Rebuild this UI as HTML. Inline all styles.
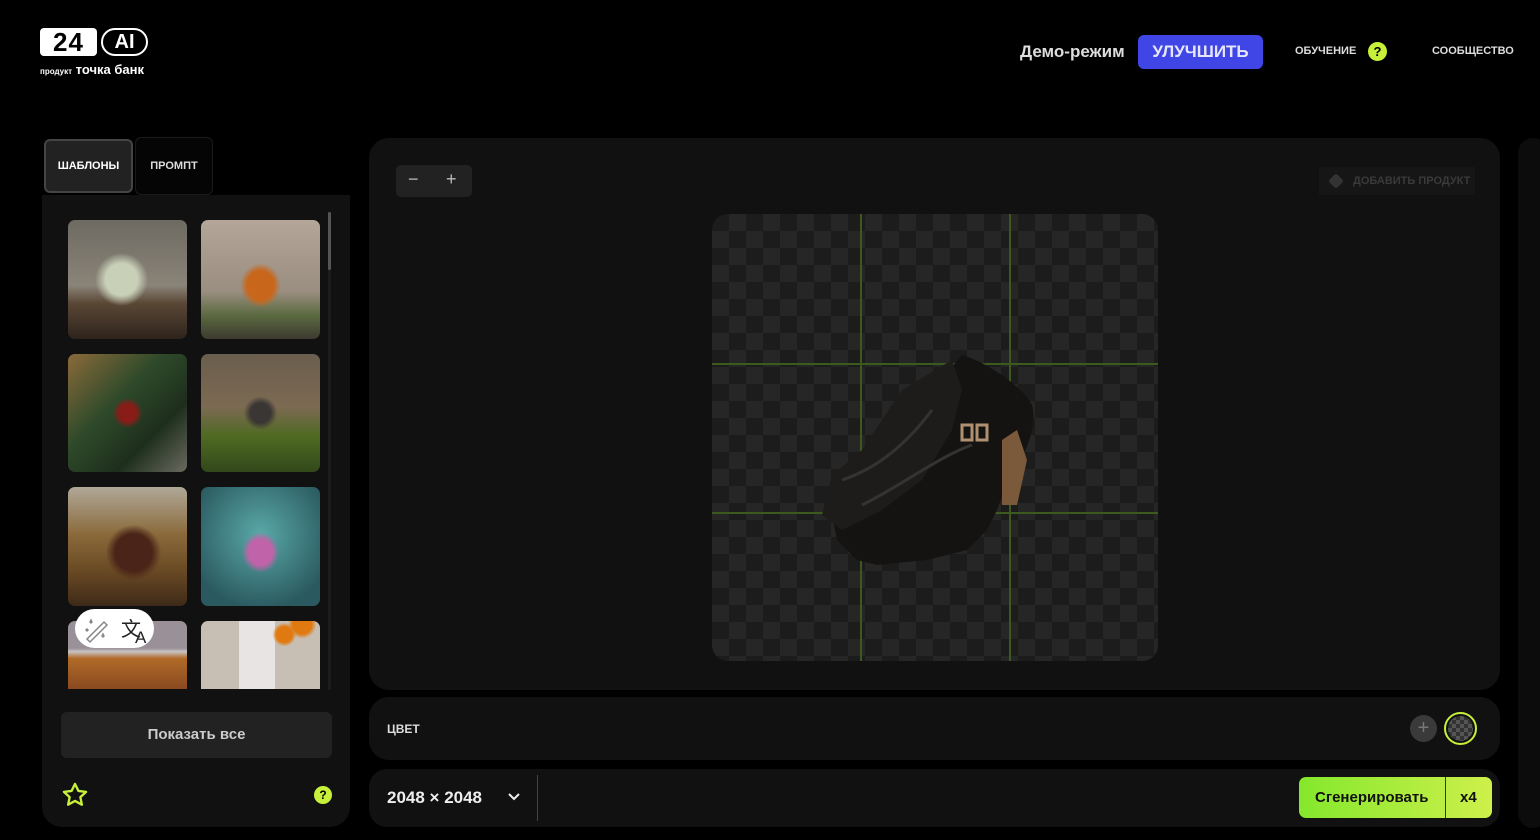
<!DOCTYPE html>
<html><head><meta charset="utf-8"><style>
*{margin:0;padding:0;box-sizing:border-box}
body{width:1540px;height:840px;background:#000;font-family:"Liberation Sans",sans-serif;color:#fff;position:relative;overflow:hidden}
.a{position:absolute}
.th{position:absolute;width:119px;border-radius:7px;overflow:hidden}
.ck{background:repeating-conic-gradient(#262626 0 25%,#1c1c1c 0 50%) 0 0/34px 34px}
</style></head><body>
<!-- logo -->
<div class="a" style="left:40px;top:28px;width:57px;height:28px;background:#fff;border-radius:4px;color:#000;font-weight:bold;font-size:26px;line-height:28px;text-align:center;letter-spacing:1px">24</div>
<div class="a" style="left:101px;top:28px;width:47px;height:28px;border:2px solid #fff;border-radius:14px;font-weight:bold;font-size:20px;line-height:24px;text-align:center">AI</div>
<div class="a" style="left:40px;top:62px;font-size:13px;font-weight:bold;white-space:nowrap"><span style="font-size:8px">продукт</span> точка банк</div>
<!-- header -->
<div class="a" style="left:1020px;top:42px;font-size:17px;font-weight:bold;color:#ddd">Демо-режим</div>
<div class="a" style="left:1138px;top:35px;width:125px;height:34px;background:#4045e6;border-radius:6px;font-size:17px;font-weight:bold;color:#e6e6ff;text-align:center;line-height:34px">УЛУЧШИТЬ</div>
<div class="a" style="left:1295px;top:45px;font-size:11px;font-weight:bold;color:#ddd">ОБУЧЕНИЕ</div>
<div class="a" style="left:1368px;top:42px;width:19px;height:19px;border-radius:50%;background:#c7f03a;color:#000;font-weight:bold;font-size:13px;text-align:center;line-height:19px">?</div>
<div class="a" style="left:1432px;top:45px;font-size:11px;font-weight:bold;color:#ddd">СООБЩЕСТВО</div>
<!-- tabs -->
<div class="a" style="left:44px;top:139px;width:89px;height:54px;background:#222;border:2px solid #444;border-radius:6px;font-size:11px;font-weight:bold;text-align:center;line-height:50px">ШАБЛОНЫ</div>
<div class="a" style="left:135px;top:137px;width:78px;height:58px;background:#050505;border:1px solid #1a1a1a;border-radius:6px;font-size:11px;font-weight:bold;color:#ddd;text-align:center;line-height:56px">ПРОМПТ</div>
<!-- left panel -->
<div class="a" style="left:42px;top:195px;width:308px;height:632px;background:#111;border-radius:0 0 20px 20px"></div>
<div class="a" style="left:328px;top:212px;width:3px;height:478px;background:#1c1c1c"></div>
<div class="a" style="left:328px;top:212px;width:3px;height:58px;background:#555;border-radius:2px"></div>
<div class="th" style="left:68px;top:220px;height:119px;background:radial-gradient(circle at 45% 50%,#c9d0b8 0 18%,transparent 30%),linear-gradient(180deg,#6d6a62 0%,#8a8478 55%,#5a4736 70%,#2e241c 100%)"></div>
<div class="th" style="left:201px;top:220px;height:119px;background:radial-gradient(ellipse at 50% 55%,#c8671c 0 16%,transparent 24%),linear-gradient(180deg,#b4a698,#9a8e80 60%,#5b6a40 80%,#3d3a30)"></div>
<div class="th" style="left:68px;top:354px;height:118px;background:radial-gradient(circle at 50% 50%,#8a1c18 0 10%,transparent 18%),linear-gradient(135deg,#8a6a3a,#2e4a2a 40%,#1e2e1c 70%,#6a6a60)"></div>
<div class="th" style="left:201px;top:354px;height:118px;background:radial-gradient(ellipse at 50% 50%,#3a3634 0 12%,transparent 20%),linear-gradient(180deg,#6a5e4e,#7c6a52 45%,#4e6a22 70%,#32481a)"></div>
<div class="th" style="left:68px;top:487px;height:119px;background:radial-gradient(ellipse at 55% 55%,#4a2418 0 20%,transparent 30%),linear-gradient(180deg,#b0a898,#8a6a3a 40%,#6a4a24 70%,#3e2a18)"></div>
<div class="th" style="left:201px;top:487px;height:119px;background:radial-gradient(ellipse at 50% 55%,#c063a8 0 14%,transparent 22%),radial-gradient(circle at 50% 40%,#5aa8a8,#2a5a60 80%)"></div>
<div class="th" style="left:68px;top:621px;height:68px;border-radius:7px 7px 0 0;background:linear-gradient(180deg,#9a9098 0 40%,#c8c4c4 45%,#b06a28 55%,#8a4a20 100%)"></div>
<div class="th" style="left:201px;top:621px;height:68px;border-radius:7px 7px 0 0;background:radial-gradient(circle at 70% 20%,#e07a10 0 8%,transparent 12%),radial-gradient(circle at 85% 5%,#e07a10 0 8%,transparent 12%),linear-gradient(90deg,transparent 32%,#e8e4e4 32% 62%,transparent 62%),#c8bfb4"></div>
<div class="a" style="left:75px;top:609px;width:79px;height:39px;background:#fff;border-radius:20px"></div>
<svg class="a" style="left:82px;top:614px" width="30" height="30" viewBox="0 0 30 30" fill="none" stroke="#888" stroke-width="1.5"><path d="M5 25L22 8l3 3L8 28z"/><path d="M8 8l1-2 1 2-1 1zM20 22l1-2 1 2-1 1zM4 16l1-1 1 1-1 1z"/></svg>
<div class="a" style="left:121px;top:613px;font-size:20px;color:#222">文<span style="font-size:17px;vertical-align:-7px;margin-left:-6px">A</span></div>
<div class="a" style="left:61px;top:712px;width:271px;height:46px;background:#222;border-radius:6px;font-size:15px;font-weight:bold;color:#ccc;text-align:center;line-height:46px">Показать все</div>
<svg class="a" style="left:61px;top:781px" width="28" height="28" viewBox="0 0 24 24" fill="none" stroke="#c7f03a" stroke-width="2" stroke-linejoin="round"><path d="M12 2.5l2.9 6 6.6.8-4.9 4.5 1.3 6.5L12 17.1 6.1 20.3l1.3-6.5-4.9-4.5 6.6-.8z"/></svg>
<div class="a" style="left:314px;top:786px;width:18px;height:18px;border-radius:50%;background:#c7f03a;color:#000;font-weight:bold;font-size:12px;text-align:center;line-height:18px">?</div>
<!-- main panel -->
<div class="a" style="left:369px;top:138px;width:1131px;height:552px;background:#111;border-radius:20px"></div>
<div class="a" style="left:1518px;top:138px;width:30px;height:690px;border-radius:20px;background:#0c0c0c"></div>
<div class="a" style="left:396px;top:165px;width:76px;height:32px;background:#222;border-radius:5px;color:#bbb;font-size:18px"><span class="a" style="left:12px;top:4px">−</span><span class="a" style="left:50px;top:4px">+</span></div>
<div class="a" style="left:1319px;top:167px;width:156px;height:28px;background:#161616;font-size:11px;font-weight:bold;color:#3a3a3a;line-height:28px;padding-left:34px">ДОБАВИТЬ ПРОДУКТ</div>
<div class="a" style="left:1329px;top:174px;width:14px;height:14px;background:#333;border-radius:3px;transform:rotate(45deg) scale(.8)"></div>
<div class="a ck" style="left:712px;top:214px;width:446px;height:447px;border-radius:16px"></div>
<div class="a" style="left:712px;top:363px;width:446px;height:2px;background:#3d5a1e"></div>
<div class="a" style="left:712px;top:512px;width:446px;height:2px;background:#3d5a1e"></div>
<div class="a" style="left:860px;top:214px;width:2px;height:447px;background:#3d5a1e"></div>
<div class="a" style="left:1009px;top:214px;width:2px;height:447px;background:#3d5a1e"></div>
<svg class="a" style="left:812px;top:345px" width="235" height="225" viewBox="0 0 235 225">
<path d="M150 10c20 5 60 30 70 50 5 20-5 50-20 65l-15 40-10 20-20 20-40 10-50 5-20-5-20-20-5-25 10-30 30-30 40-40z" fill="#151311"/>
<path d="M140 15l-50 30-40 60-30 25-10 40 20 15 40-20 40-30 30-50 10-40z" fill="#1e1c1a"/>
<path d="M190 95l15-10 10 30-10 45-15 0z" fill="#7a5a3a"/>
<path d="M150 80h10v15h-10zM165 80h10v15h-10z" fill="none" stroke="#b09070" stroke-width="3"/>
<path d="M30 135c30-10 60-30 90-70M50 160c40-20 80-50 110-60" stroke="#333" stroke-width="3" fill="none"/>
</svg>
<!-- color panel -->
<div class="a" style="left:369px;top:697px;width:1131px;height:63px;background:#111;border-radius:20px"></div>
<div class="a" style="left:387px;top:722px;font-size:12px;font-weight:bold;color:#ddd">ЦВЕТ</div>
<div class="a" style="left:1410px;top:715px;width:27px;height:27px;border-radius:50%;background:#3a3a3a;color:#777;font-size:20px;text-align:center;line-height:26px">+</div>
<div class="a" style="left:1444px;top:712px;width:33px;height:33px;border-radius:50%;border:2px solid #c7f03a;padding:2px"><div style="width:100%;height:100%;border-radius:50%;background:repeating-conic-gradient(#555 0 25%,#333 0 50%) 0 0/8px 8px"></div></div>
<!-- bottom bar -->
<div class="a" style="left:369px;top:769px;width:1131px;height:58px;background:#111;border-radius:18px"></div>
<div class="a" style="left:387px;top:788px;font-size:17px;font-weight:bold;color:#eee">2048 × 2048</div>
<svg class="a" style="left:507px;top:791px" width="14" height="12" viewBox="0 0 14 12"><path d="M2 3l5 5 5-5" stroke="#eee" stroke-width="2" fill="none"/></svg>
<div class="a" style="left:537px;top:775px;width:1px;height:46px;background:#444"></div>
<div class="a" style="left:1299px;top:777px;width:193px;height:41px;border-radius:7px;background:linear-gradient(90deg,#84e82c,#cef04a)"></div>
<div class="a" style="left:1445px;top:777px;width:1px;height:41px;background:#333"></div>
<div class="a" style="left:1315px;top:789px;font-size:15px;font-weight:bold;color:#111">Сгенерировать</div>
<div class="a" style="left:1460px;top:789px;font-size:15px;font-weight:bold;color:#111">x4</div>
</body></html>
